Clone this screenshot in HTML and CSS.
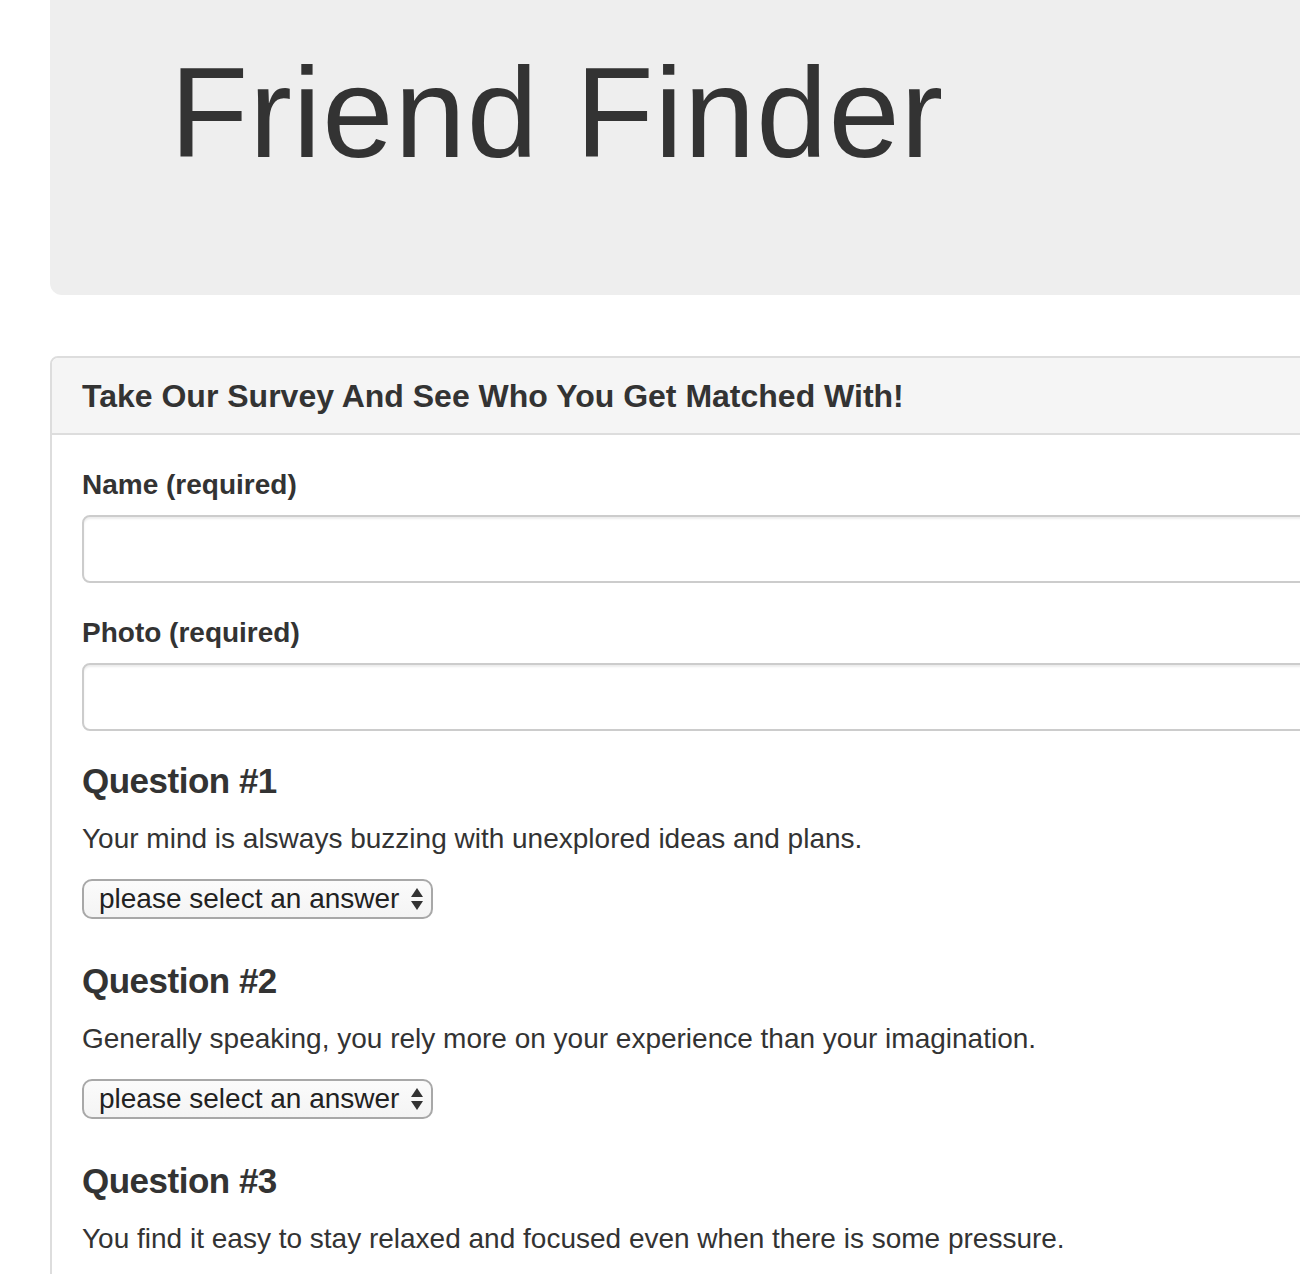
FILE: index.html
```html
<!DOCTYPE html>
<html lang="en">
<head>
<meta charset="utf-8">
<title>Friend Finder</title>
<link rel="stylesheet" href="styles.css">
</head>
<body>
<div class="container">
  <div class="jumbotron">
    <h1>Friend Finder</h1>
  </div>
  <div class="panel">
    <div class="panel-heading">
      <h3 class="panel-title">Take Our Survey And See Who You Get Matched With!</h3>
    </div>
    <div class="panel-body">
      <form>
        <div class="form-group">
          <label for="name">Name (required)</label>
          <input id="name" class="form-control" type="text">
        </div>
        <div class="form-group">
          <label for="photo">Photo (required)</label>
          <input id="photo" class="form-control" type="text">
        </div>

        <div class="question">
          <h3>Question #1</h3>
          <p>Your mind is alsways buzzing with unexplored ideas and plans.</p>
          <div class="select-wrap">
            <select class="answer">
              <option>please select an answer</option>
              <option>1 (Strongly Disagree)</option>
              <option>2</option><option>3</option><option>4</option>
              <option>5 (Strongly Agree)</option>
            </select>
            <svg class="arrows" width="14" height="24" viewBox="0 0 14 24"><path d="M7 1 L13 10 L1 10 Z" fill="#333"/><path d="M1 14 L13 14 L7 23 Z" fill="#333"/></svg>
          </div>
        </div>

        <div class="question">
          <h3>Question #2</h3>
          <p>Generally speaking, you rely more on your experience than your imagination.</p>
          <div class="select-wrap">
            <select class="answer">
              <option>please select an answer</option>
              <option>1 (Strongly Disagree)</option>
              <option>2</option><option>3</option><option>4</option>
              <option>5 (Strongly Agree)</option>
            </select>
            <svg class="arrows" width="14" height="24" viewBox="0 0 14 24"><path d="M7 1 L13 10 L1 10 Z" fill="#333"/><path d="M1 14 L13 14 L7 23 Z" fill="#333"/></svg>
          </div>
        </div>

        <div class="question">
          <h3>Question #3</h3>
          <p>You find it easy to stay relaxed and focused even when there is some pressure.</p>
          <div class="select-wrap">
            <select class="answer">
              <option>please select an answer</option>
              <option>1 (Strongly Disagree)</option>
              <option>2</option><option>3</option><option>4</option>
              <option>5 (Strongly Agree)</option>
            </select>
            <svg class="arrows" width="14" height="24" viewBox="0 0 14 24"><path d="M7 1 L13 10 L1 10 Z" fill="#333"/><path d="M1 14 L13 14 L7 23 Z" fill="#333"/></svg>
          </div>
        </div>
      </form>
    </div>
  </div>
</div>
</body>
</html>
```
FILE: styles.css
```css
html, body {
  margin: 0;
  padding: 0;
  overflow: hidden;
  background: #fff;
}
body {
  font-family: "Liberation Sans", Arial, Helvetica, sans-serif;
  font-size: 28px;
  line-height: 40px;
  color: #333;
}
.container {
  width: 1500px;
  margin-left: 50px;
}
.jumbotron {
  background: #eee;
  border-radius: 0 0 12px 12px;
  padding: 43px 120px 111px;
  margin-bottom: 61px;
}
.jumbotron h1 {
  margin: 0;
  font-size: 128px;
  line-height: 1.1;
  font-weight: normal;
  letter-spacing: 1px;
}
.panel {
  border: 2px solid #ddd;
  border-radius: 8px;
  background: #fff;
}
.panel-heading {
  background: #f5f5f5;
  border-bottom: 2px solid #ddd;
  border-radius: 6px 6px 0 0;
  padding: 21px 30px 19px;
}
.panel-title {
  margin: 0;
  font-size: 32px;
  line-height: 1.1;
  font-weight: bold;
}
.panel-body {
  padding: 30px;
}
form {
  margin: 0;
}
.form-group {
  margin-bottom: 30px;
}
.form-group label {
  display: block;
  font-weight: bold;
  margin-bottom: 10px;
}
.form-control {
  display: block;
  box-sizing: border-box;
  width: 100%;
  height: 68px;
  padding: 12px 24px;
  font-family: inherit;
  font-size: 28px;
  color: #555;
  background: #fff;
  border: 2px solid #ccc;
  border-radius: 8px;
  box-shadow: inset 0 2px 2px rgba(0, 0, 0, 0.075);
  outline: none;
}
.question {
  margin-bottom: 42px;
}
.question h3 {
  margin: 0 0 18px;
  font-size: 35px;
  line-height: 40px;
  font-weight: bold;
  letter-spacing: -0.5px;
}
.question p {
  margin: 0 0 20px;
}
.select-wrap {
  position: relative;
  width: 351px;
  height: 40px;
}
.answer {
  -webkit-appearance: none;
  appearance: none;
  box-sizing: border-box;
  width: 351px;
  height: 40px;
  margin: 0;
  padding: 0 0 0 15px;
  font-family: "Liberation Sans", Arial, sans-serif;
  font-size: 28px;
  line-height: 36px;
  color: #222;
  background: linear-gradient(#fbfbfb, #f4f4f4);
  border: 2px solid #a8a8a8;
  border-radius: 10px;
  outline: none;
}
.arrows {
  position: absolute;
  right: 9px;
  top: 8px;
  pointer-events: none;
}
```
